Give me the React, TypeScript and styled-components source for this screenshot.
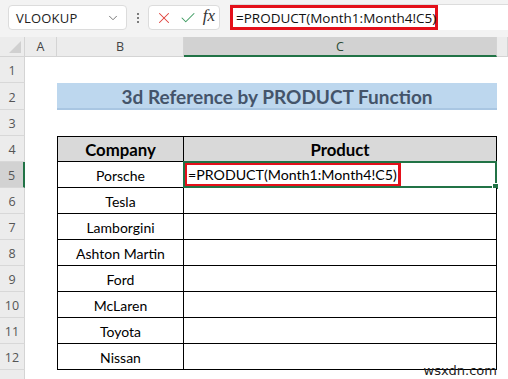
import React from "react";
import styled, { createGlobalStyle } from "styled-components";
import { ChevronDown, X, Check } from "lucide-react";

const GlobalStyle = createGlobalStyle`
  html, body {
    margin: 0;
    padding: 0;
    background: #ffffff;
  }
  * { box-sizing: border-box; }
`;

const COLS = "25px 32px 127px 313px 1fr";
const GREEN = "#217346";

// page + top formula bar
const Page = styled.div`
  position: relative;
  width: 508px;
  height: 379px;
  overflow: hidden;
  background: #fff;
  font-family: Lato, "Liberation Sans", sans-serif;
`;

const TopBar = styled.div`
  height: 37px;
  background: #f3f3f3;
  display: flex;
  align-items: flex-start;
  padding-top: 5px;
  padding-left: 8px;
  font-family: "Open Sans", "Noto Sans", sans-serif;
`;

const NameBox = styled.div`
  width: 119px;
  height: 25px;
  background: #fff;
  border: 1px solid #dcdcdc;
  border-radius: 4px;
  display: flex;
  align-items: center;
  justify-content: space-between;
  padding: 0 6px 0 7px;
  font-size: 13px;
  color: #222;
  letter-spacing: 0.2px;
`;

const Dots = styled.div`
  width: 21px;
  height: 25px;
  display: flex;
  flex-direction: column;
  align-items: center;
  justify-content: center;
  gap: 2px;
  & span {
    width: 2px;
    height: 2px;
    background: #555;
    border-radius: 1px;
  }
`;

const FxBox = styled.div`
  width: 72px;
  height: 25px;
  background: #fff;
  border: 1px solid #dcdcdc;
  border-radius: 4px;
  display: flex;
  align-items: center;
  justify-content: space-between;
  padding: 0 4px 0 6px;
`;

const FxText = styled.span`
  font-family: "Liberation Serif", "DejaVu Serif", serif;
  font-style: italic;
  font-size: 17px;
  color: #333;
  margin-top: -3px;
`;

const FormulaBar = styled.div`
  flex: 1;
  height: 26px;
  margin-left: 10px;
  margin-top: -1px;
  background: #fff;
  border-top: 1px solid #dcdcdc;
  display: flex;
  align-items: stretch;
`;

const RedBox = styled.div`
  width: 208px;
  border: 3px solid #e4101a;
  display: flex;
  align-items: center;
  padding-left: 3px;
  font-size: 13.5px;
  color: #111;
  white-space: nowrap;
`;

// sheet grid
const Sheet = styled.div`
  display: flex;
  flex-direction: column;
`;

const Row = styled.div<{ $h: number }>`
  display: grid;
  grid-template-columns: ${COLS};
  height: ${(p) => p.$h}px;
`;

const Corner = styled.div`
  background: #ececec;
  border-right: 1px solid #d4d4d4;
  border-bottom: 1px solid #d4d4d4;
  position: relative;
  &::after {
    content: "";
    position: absolute;
    right: 3px;
    bottom: 3px;
    width: 0;
    height: 0;
    border-left: 12px solid transparent;
    border-bottom: 12px solid #d0d0d0;
  }
`;

const ColHead = styled.div<{ $sel?: boolean }>`
  background: ${(p) => (p.$sel ? "#d2d2d2" : "#ececec")};
  border-right: 1px solid #d4d4d4;
  border-bottom: ${(p) => (p.$sel ? `2px solid ${GREEN}` : "1px solid #d4d4d4")};
  display: flex;
  align-items: center;
  justify-content: center;
  font-family: "Open Sans", "Noto Sans", sans-serif;
  font-size: 12.5px;
  color: ${(p) => (p.$sel ? "#2a4a35" : "#444")};
`;

const RowHead = styled.div<{ $sel?: boolean }>`
  background: ${(p) => (p.$sel ? "#d2d2d2" : "#ececec")};
  border-right: ${(p) => (p.$sel ? `2px solid ${GREEN}` : "1px solid #d4d4d4")};
  border-bottom: 1px solid #d8d8d8;
  display: flex;
  align-items: center;
  justify-content: center;
  padding-top: 2px;
  font-family: "Open Sans", "Noto Sans", sans-serif;
  font-size: 12.5px;
  color: #555;
`;

const Cell = styled.div`
  background: #fff;
`;

const TitleCell = styled.div`
  grid-column: span 2;
  background: #bdd7ee;
  border-bottom: 2px solid #a9c6e2;
  display: flex;
  align-items: center;
  justify-content: center;
  font-weight: 700;
  font-size: 19px;
  color: #44546a;
  padding-top: 1px;
`;

const TableCell = styled.div<{ $first?: boolean; $top?: boolean; $head?: boolean }>`
  background: ${(p) => (p.$head ? "#d9d9d9" : "#fff")};
  border-right: 1px solid #000;
  border-bottom: 1px solid #000;
  border-left: ${(p) => (p.$first ? "1px solid #000" : "none")};
  border-top: ${(p) => (p.$top ? "1px solid #000" : "none")};
  display: flex;
  align-items: center;
  justify-content: center;
  font-size: ${(p) => (p.$head ? "16.8px" : "14px")};
  font-weight: ${(p) => (p.$head ? 700 : 400)};
  color: #000;
  padding-top: 1px;
  position: relative;
`;

const FormulaCell = styled(TableCell)`
  justify-content: flex-start;
  align-items: stretch;
  padding-top: 0;
`;

const CellRedBox = styled.div`
  width: 217px;
  border: 3px solid #e4101a;
  display: flex;
  align-items: center;
  padding-left: 1px;
  font-size: 14.2px;
  white-space: nowrap;
`;

const Selection = styled.div`
  position: absolute;
  left: -1px;
  top: -1px;
  right: -1px;
  bottom: -1px;
  border: 2px solid ${GREEN};
  pointer-events: none;
  &::after {
    content: "";
    position: absolute;
    right: -4px;
    bottom: -4px;
    width: 5px;
    height: 5px;
    background: ${GREEN};
    border: 1px solid #fff;
  }
`;

const Watermark = styled.div`
  position: absolute;
  right: 11px;
  bottom: 1px;
  line-height: 14px;
  font-family: "DejaVu Sans", sans-serif;
  font-size: 13px;
  color: #222;
`;

const cars = ["Porsche", "Tesla", "Lamborgini", "Ashton Martin", "Ford", "McLaren", "Toyota", "Nissan"];
const formula = "=PRODUCT(Month1:Month4!C5)";

export default function App() {
  return (
    <Page>
      <GlobalStyle />
      <TopBar>
        <NameBox>
          <span>VLOOKUP</span>
          <ChevronDown size={14} color="#666" strokeWidth={1.5} />
        </NameBox>
        <Dots>
          <span />
          <span />
          <span />
        </Dots>
        <FxBox>
          <X size={18} color="#e0403a" strokeWidth={1.4} />
          <Check size={18} color="#3c9a5f" strokeWidth={1.4} />
          <FxText>fx</FxText>
        </FxBox>
        <FormulaBar>
          <RedBox>{formula}</RedBox>
        </FormulaBar>
      </TopBar>
      <Sheet>
        <Row $h={20}>
          <Corner />
          <ColHead>A</ColHead>
          <ColHead>B</ColHead>
          <ColHead $sel>C</ColHead>
          <ColHead />
        </Row>
        <Row $h={26}>
          <RowHead>1</RowHead>
          <Cell />
          <Cell />
          <Cell />
          <Cell />
        </Row>
        <Row $h={27}>
          <RowHead>2</RowHead>
          <Cell />
          <TitleCell>3d Reference by PRODUCT Function</TitleCell>
          <Cell />
        </Row>
        <Row $h={26}>
          <RowHead>3</RowHead>
          <Cell />
          <Cell />
          <Cell />
          <Cell />
        </Row>
        <Row $h={26}>
          <RowHead>4</RowHead>
          <Cell />
          <TableCell $first $top $head>Company</TableCell>
          <TableCell $top $head>Product</TableCell>
          <Cell />
        </Row>
        {cars.map((car, i) => (
          <Row $h={26} key={car}>
            <RowHead $sel={i === 0}>{i + 5}</RowHead>
            <Cell />
            <TableCell $first>{car}</TableCell>
            {i === 0 ? (
              <FormulaCell>
                <CellRedBox>{formula}</CellRedBox>
                <Selection />
              </FormulaCell>
            ) : (
              <TableCell />
            )}
            <Cell />
          </Row>
        ))}
        <Row $h={26}>
          <RowHead />
          <Cell />
          <Cell />
          <Cell />
          <Cell />
        </Row>
      </Sheet>
      <Watermark>wsxdn.com</Watermark>
    </Page>
  );
}
